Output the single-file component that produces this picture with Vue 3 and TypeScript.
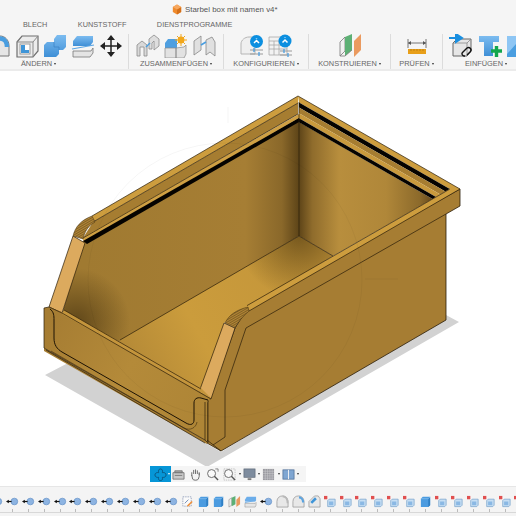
<template>
  <div class="app">
    <!-- icon sheet -->
    <svg class="sheet" width="0" height="0" aria-hidden="true">
      <defs>
        <linearGradient id="blueFace" x1="0" y1="0" x2="0" y2="1">
          <stop offset="0" stop-color="#7cbcf0" />
          <stop offset="1" stop-color="#3f8fd6" />
        </linearGradient>
      </defs>
      <symbol id="fillet" viewBox="0 0 24 24">
        <path d="M2 22V12C2 6 7 2 13 2C18 2 22 6 22 12V22Z" fill="#e6e6e6" stroke="#777" />
        <path d="M13 4.500C17 4.500 20 8 20 13" fill="none" stroke="#4a9ee0" stroke-width="4.500" />
      </symbol>
      <symbol id="shell" viewBox="0 0 24 24">
        <path d="M2 8L7 2H23V17L18 23H2Z" fill="#ececec" stroke="#6f6f6f" stroke-width="1.200" />
        <path d="M2 8H18V23M18 8L23 2" fill="none" stroke="#8a8a8a" />
        <rect x="5" y="10" width="10" height="10" fill="#fff" stroke="#999" />
        <path d="M6 11H10V16H14V19H6Z" fill="#3f95d8" />
      </symbol>
      <symbol id="combine" viewBox="0 0 24 24">
        <path d="M11 5L14 1H23V13L20 16H16V20L13 23H1V11L4 8H11Z" fill="url(#blueFace)" />
        <path d="M11 8V13H16V16" fill="none" stroke="#3a82c4" stroke-width=".7" />
      </symbol>
      <symbol id="offset" viewBox="0 0 24 24">
        <path d="M2 7L6 2H22V8L19 12H2Z" fill="url(#blueFace)" />
        <path d="M1 15L23 11" stroke="#5aa5e4" stroke-width="1.200" />
        <path d="M2 17H20L22 14V19L19 23H2Z" fill="#e4e4e4" stroke="#777" stroke-width=".8" />
      </symbol>
      <symbol id="move" viewBox="0 0 24 24">
        <path d="M12 3V21M3 12H21" stroke="#222" stroke-width="1.500" />
        <path d="M12 1L16 6H8ZM12 23L8 18H16ZM1 12L6 8V16ZM23 12L18 16V8Z" fill="#222" />
      </symbol>
      <symbol id="joinA" viewBox="0 0 24 24">
        <path d="M1 22V11L6 7L11 11V22H8V13H4V22Z" fill="#d9d9d9" stroke="#8a8a8a" stroke-width=".8" />
        <path d="M13 15V5L18 1L23 5V12L18 16V7L16 9V15Z" fill="#dedede" stroke="#8a8a8a" stroke-width=".8" />
        <path d="M10 13L14 9" stroke="#4a9ee0" stroke-width="1.400" />
      </symbol>
      <symbol id="asbuilt" viewBox="0 0 24 24">
        <path d="M1 9L4 5H13V14H1Z" fill="#4f9fe0" />
        <path d="M1 14H12V24H1ZM12 14L20 13L22 11V20L20 24H12Z" fill="#e2e2e2" stroke="#888" stroke-width=".7" />
        <circle cx="17" cy="6" r="3.400" fill="#f2a71b" />
        <path d="M17 0V12M11 6H23M13 2L21 10M21 2L13 10" stroke="#f2a71b" stroke-width="1" />
      </symbol>
      <symbol id="joinB" viewBox="0 0 24 24">
        <path d="M2 21V7L9 2V16Z" fill="#e0e0e0" stroke="#888" stroke-width=".8" />
        <path d="M14 6L20 3L23 8V22L18 18L14 21Z" fill="#e0e0e0" stroke="#888" stroke-width=".8" />
        <path d="M9 11L14 8" stroke="#4a9ee0" stroke-width="1.600" />
      </symbol>
      <symbol id="config" viewBox="0 0 24 24">
        <path d="M1 20V10C1 6 5 3 9 3H15V20Z" fill="#efefef" stroke="#b5b5b5" />
        <circle cx="16.500" cy="7.500" r="6.500" fill="#0c8fe0" />
        <path d="M14 9L16.500 6.500L19 9M16.500 4.500V4" stroke="#fff" stroke-width="1.500" fill="none" />
        <path d="M10 16H23M10 20H23" stroke="#9a9a9a" />
        <path d="M14 14V18M19 18V22" stroke="#4a9ee0" stroke-width="1.300" />
      </symbol>
      <symbol id="table" viewBox="0 0 24 24">
        <path d="M1 3H19V21H1ZM1 7H19M1 11H19M1 15H19M6 7V21M11 7V21" fill="#f2f2f2" stroke="#a8a8a8" stroke-width=".8" />
        <circle cx="17" cy="7" r="6.500" fill="#0c8fe0" />
        <path d="M14.500 8.500L17 6L19.500 8.500M17 4V3.500" stroke="#fff" stroke-width="1.500" fill="none" />
        <path d="M12 17H24M12 21H24" stroke="#9a9a9a" />
        <path d="M16 15V19M20 19V23" stroke="#4a9ee0" stroke-width="1.300" />
      </symbol>
      <symbol id="plane" viewBox="0 0 24 24">
        <path d="M2 8L7 3V17L2 22Z" fill="#f1f1f1" stroke="#777" stroke-width=".8" />
        <path d="M7 3L14 0V16L7 22Z" fill="#5db075" />
        <path d="M2 22H7L14 16" fill="none" stroke="#777" stroke-width=".8" />
        <path d="M16 7L23 0V16L16 23Z" fill="#ea9a5f" />
      </symbol>
      <symbol id="ruler" viewBox="0 0 24 24">
        <path d="M3 5V14M21 5V14" stroke="#777" />
        <path d="M3 9H21" stroke="#777" />
        <path d="M3 9L6 7V11ZM21 9L18 7V11Z" fill="#555" />
        <rect x="3" y="15" width="18" height="5" fill="#e89f19" />
        <path d="M6 15V17M9 15V17M12 15V17M15 15V17M18 15V17" stroke="#a66f0c" stroke-width=".6" />
      </symbol>
      <symbol id="link" viewBox="0 0 24 24">
        <path d="M4 9L8 5H22V17L18 22H4Z" fill="#e6e6e6" stroke="#666" />
        <path d="M18 9V22M4 9H18L22 5" fill="none" stroke="#888" stroke-width=".8" />
        <path d="M0 4H7M7 0L13 4L7 8Z" stroke="#1a8fe0" stroke-width="2" fill="#1a8fe0" />
        <path d="M13 19L18 14A2.500 2.500 0 0 1 21.500 17.500L18 21M13 19A2.500 2.500 0 0 0 16 22" fill="none" stroke="#111" stroke-width="1.400" />
      </symbol>
      <symbol id="bolt" viewBox="0 0 24 24">
        <path d="M1 2H21V8H15V22H6V8H1Z" fill="url(#blueFace)" />
        <path d="M13 17H24M18.500 12V23" stroke="#13a64d" stroke-width="3.400" />
      </symbol>
      <symbol id="image" viewBox="0 0 24 24">
        <rect x="0" y="2" width="24" height="21" fill="#4a9ee0" />
        <path d="M0 20L9 10L14 14L24 6V2H0Z" fill="#8ec6f4" />
      </symbol>

      <symbol id="t-joint" viewBox="0 0 14 14">
        <circle cx="9" cy="7" r="3.600" fill="#8db4e2" stroke="#5e8cc4" stroke-width=".7" />
        <path d="M2 7H6" stroke="#111" stroke-width="1.300" />
        <path d="M0 7L3 5V9Z" fill="#111" />
      </symbol>
      <symbol id="t-sketch" viewBox="0 0 14 14">
        <path d="M2 2H11V12H2Z" fill="#fafafa" stroke="#7f8fb0" stroke-width=".8" stroke-dasharray="1.500 1" />
        <path d="M4 9L8 5" stroke="#6d86b0" />
        <path d="M7 12L12 7" stroke="#ef8f3a" stroke-width="1.600" />
      </symbol>
      <symbol id="t-box" viewBox="0 0 14 14">
        <path d="M2 4L4 2H12V11L10 13H2Z" fill="#4b9be0" />
        <path d="M10 4L12 2V11L10 13Z" fill="#2f7fc4" />
        <path d="M2 4H10L12 2" fill="none" stroke="#9ccbf2" stroke-width=".6" />
      </symbol>
      <symbol id="t-split" viewBox="0 0 14 14">
        <path d="M1 5L4 3V11L1 13Z" fill="#eee" stroke="#888" stroke-width=".6" />
        <path d="M4 3L8 1V10L4 12Z" fill="#5db075" />
        <path d="M9 5L13 1V10L9 13Z" fill="#ea9a5f" />
      </symbol>
      <symbol id="t-offset" viewBox="0 0 14 14">
        <path d="M1 5L3 2H13V5L12 7H1Z" fill="#6badea" />
        <path d="M1 8L13 6" stroke="#6badea" />
        <path d="M1 9H12L13 8V11L12 13H1Z" fill="#e6e6e6" stroke="#888" stroke-width=".5" />
      </symbol>
      <symbol id="t-fillet" viewBox="0 0 14 14">
        <path d="M1 13V7C1 3 4 1 7 1C11 1 13 4 13 8V13Z" fill="#e8e8e8" stroke="#8b8b8b" stroke-width=".7" />
        <path d="M7 1.500C11 1.500 12.500 5 12.500 9" fill="none" stroke="#b9b9b9" stroke-width="2" />
      </symbol>
      <symbol id="t-fillet2" viewBox="0 0 14 14">
        <path d="M1 13V7C1 3 4 1 7 1C11 1 13 4 13 8V13Z" fill="#e8e8e8" stroke="#8b8b8b" stroke-width=".7" />
        <path d="M7.500 2.500C10 2.500 12 5 12 8" fill="none" stroke="#5aa3e0" stroke-width="2.400" />
      </symbol>
      <symbol id="t-chamfer" viewBox="0 0 14 14">
        <path d="M1 13V7L7 1H11L13 4V13Z" fill="#e8e8e8" stroke="#8b8b8b" stroke-width=".7" />
        <path d="M2.500 7.500L7.500 2.500L9.500 4.500L4.500 9.500Z" fill="#3f95d8" />
      </symbol>
      <symbol id="t-xbox" viewBox="0 0 14 14">
        <rect x="0" y="1" width="3.600" height="3.600" fill="#e04f4f" />
        <path d="M4 6L5.500 4.500H12V11L10.500 12.500H4Z" fill="#c6def3" stroke="#6a9ac8" stroke-width=".7" />
        <rect x="5.500" y="7" width="4.500" height="4" fill="#8ab8e4" />
      </symbol>

      <symbol id="n-orbit" viewBox="0 0 14 14">
        <path d="M7 1C9 1 9.500 3 9 5C11 4.500 13 5.500 13 7.500C13 9.500 11 10.500 9 10C9.500 12 9 13.500 7 13.500C5 13.500 4.500 12 5 10C3 10.500 1 9.500 1 7.500C1 5.500 3 4.500 5 5C4.500 3 5 1 7 1Z" fill="none" stroke="#0b4f78" stroke-width=".9" />
      </symbol>
      <symbol id="n-look" viewBox="0 0 14 14">
        <path d="M1 5H13V12H1Z" fill="#c8c8c8" stroke="#666" stroke-width=".8" />
        <path d="M3 3H11V5H3ZM3 8H11" fill="#aaa" stroke="#666" stroke-width=".8" />
      </symbol>
      <symbol id="n-hand" viewBox="0 0 14 14">
        <path d="M3 8V5M5 6V2.500M7 6V2M9 6V3M11 7V5M3 8L4 12C5 13.500 9 13.500 10 12L11 9V6" fill="#f4f4f4" stroke="#666" stroke-width="1" stroke-linecap="round" />
      </symbol>
      <symbol id="n-zoom" viewBox="0 0 14 14">
        <circle cx="6" cy="6" r="4.300" fill="#fafafa" stroke="#666" />
        <path d="M9 9L13 13" stroke="#555" stroke-width="1.500" />
        <path d="M10 1H13V4" fill="none" stroke="#666" stroke-width=".8" />
      </symbol>
      <symbol id="n-fit" viewBox="0 0 14 14">
        <path d="M1 1H13V13H1Z" fill="none" stroke="#aaa" stroke-width=".7" stroke-dasharray="1.500 1" />
        <circle cx="6" cy="6" r="4.300" fill="#fafafa" stroke="#666" />
        <path d="M9 9L13 13" stroke="#555" stroke-width="1.500" />
      </symbol>
      <symbol id="n-screen" viewBox="0 0 14 14">
        <rect x="1" y="1" width="12" height="9" fill="#7e8c9e" stroke="#5b6675" stroke-width=".7" />
        <path d="M5 11H9V13H5Z" fill="#7c7c7c" />
      </symbol>
      <symbol id="n-grid" viewBox="0 0 14 14">
        <rect x="1" y="1" width="12" height="12" fill="#9a9aa0" />
        <path d="M3.500 1V13M6 1V13M8.500 1V13M11 1V13M1 3.500H13M1 6H13M1 8.500H13M1 11H13" stroke="#d2d2d6" stroke-width=".5" />
      </symbol>
      <symbol id="n-views" viewBox="0 0 14 14">
        <rect x="1" y="2" width="12" height="10" fill="#7fa6d2" stroke="#4f6f96" stroke-width=".8" />
        <path d="M7 2V12" stroke="#f4f4f4" />
      </symbol>
    </svg>

    <header class="toolbar">
      <div class="title">
        <svg class="doc-icon" viewBox="0 0 12 12">
          <path d="M6 0L11 3V9L6 12L1 9V3Z" fill="#ef8a2c" />
          <path d="M6 6L11 3V9L6 12Z" fill="#d4701a" />
          <path d="M6 0L11 3L6 6L1 3Z" fill="#f6a860" />
        </svg>
        <span>Starbel box mit namen v4*</span>
      </div>
      <nav class="tabs">
        <span v-for="t in tabs" :key="t">{{ t }}</span>
      </nav>
      <div class="panels">
        <section v-for="p in panels" :key="p.label" class="panel" :class="p.cls">
          <div class="panel-icons">
            <svg v-for="(ic, i) in p.icons" :key="i" class="tool"><use :href="'#' + ic" /></svg>
          </div>
          <div class="panel-label">{{ p.label }}<i class="caret"></i></div>
        </section>
      </div>
    </header>

    <main class="viewport">
      <svg class="scene" viewBox="0 71 516 415">
        <defs>
          <linearGradient id="wallR" gradientUnits="userSpaceOnUse" x1="299" y1="0" x2="433" y2="0">
            <stop offset="0" stop-color="#5d4418" />
            <stop offset=".1" stop-color="#8f6c2c" />
            <stop offset=".3" stop-color="#b88e3d" />
            <stop offset=".65" stop-color="#b08739" />
            <stop offset=".9" stop-color="#8c6a2b" />
            <stop offset="1" stop-color="#66491c" />
          </linearGradient>
          <linearGradient id="wallL" gradientUnits="userSpaceOnUse" x1="85" y1="0" x2="299" y2="0">
            <stop offset="0" stop-color="#a07a31" />
            <stop offset=".75" stop-color="#a67e34" />
            <stop offset=".92" stop-color="#8a682a" />
            <stop offset="1" stop-color="#5d4418" />
          </linearGradient>
          <radialGradient id="cornerDark" gradientUnits="userSpaceOnUse" cx="76" cy="322" r="54">
            <stop offset="0" stop-color="#2c1e06" stop-opacity=".55" />
            <stop offset="1" stop-color="#2c1e06" stop-opacity="0" />
          </radialGradient>
          <radialGradient id="floorDark" gradientUnits="userSpaceOnUse" cx="299" cy="236" r="62">
            <stop offset="0" stop-color="#3a2808" stop-opacity=".55" />
            <stop offset="1" stop-color="#3a2808" stop-opacity="0" />
          </radialGradient>
          <linearGradient id="floor" gradientUnits="userSpaceOnUse" x1="120" y1="340" x2="300" y2="240">
            <stop offset="0" stop-color="#b58a37" />
            <stop offset=".35" stop-color="#cb9c3c" />
            <stop offset="1" stop-color="#c3953a" />
          </linearGradient>
          <linearGradient id="plate" gradientUnits="userSpaceOnUse" x1="44" y1="330" x2="205" y2="420">
            <stop offset="0" stop-color="#a67d33" />
            <stop offset=".5" stop-color="#b48a39" />
            <stop offset="1" stop-color="#ae8536" />
          </linearGradient>
          <pattern id="hatch" width="2" height="2" patternUnits="userSpaceOnUse" patternTransform="rotate(-30)">
            <rect width="2" height="2" fill="#b38737" />
            <path d="M0 .5H2" stroke="#6c4f1c" stroke-width=".7" />
          </pattern>
        </defs>

        <polygon class="shadow" points="68,363 45,375 207,467 459,322 446,315 221,452" />

        <!-- inside of the bin -->
        <polygon fill="url(#wallL)" points="299,118 83,241 62,314 120,342 299,236" />
        <polygon fill="url(#cornerDark)" points="299,118 83,241 62,314 120,342 299,236" />
        <polygon fill="url(#wallR)" points="299,122 432.600,199 333,256 299,236" />
        <polygon fill="url(#floor)" points="120,340 299,236 333,256 224,323 204,396 120,348" />
        <polygon fill="url(#floorDark)" points="120,340 299,236 333,256 224,323 204,396 120,348" />
        <path class="ln" d="M299 122V236M120 340L299 236L333 256" />

        <!-- back rim, left run -->
        <polygon fill="#a67d31" points="298,103 298,114 83,238 93,222" />
        <polygon fill="#cfa043" points="299,114 299,118 85,243 82,238" />
        <polygon fill="#050300" points="299,118 299,122 87,244 83,241" />
        <polygon fill="#cd9d3e" points="298,96 298,103 93,222 92,216" />
        <path class="ln" d="M298 96L92 216M298 103L93 222M298 114L83 238" />

        <!-- back rim, right run -->
        <polygon fill="#cd9d3e" points="298,96 460,189 449.800,189.100 299,102.500" />
        <polygon fill="#050300" points="299,102.500 449.800,189.100 445.400,191.600 299,107.500" />
        <polygon fill="#a67d31" points="299,107.500 445.400,191.600 440.400,194.500 299,113.300" />
        <polygon fill="#c99a3d" points="299,113.300 440.400,194.500 436,197 299,118.300" />
        <polygon fill="#050300" points="299,118.300 436,197 432.600,199 299,122.300" />
        <path class="ln" d="M298 96L460 189M299 102V122" />

        <!-- outer side -->
        <polygon fill="#a67d33" stroke="#2a1c08" stroke-width=".8" stroke-linejoin="round"
          points="248,307 460,189 460,206 446,214 446,320 221,451 207,443 207,403 210,398 235,328" />
        <polygon fill="#cd9d3e" points="460,189 449.800,189.100 247,305.600 249,311" />
        <path class="ln" d="M449.800 189.100L247 305.600M460 189L249 311M446 214L246 328L225 390V437L213 445M207 440L221 451" />

        <!-- raised strips and hatched radii -->
        <polygon fill="#dcaa5e" stroke="#2a1c08" stroke-width=".7" points="73,236 85,243 62,313 49,307" />
        <polygon fill="#dcaa5e" stroke="#2a1c08" stroke-width=".7" points="224,323 235,328 211,399 199,392" />
        <path fill="url(#hatch)" stroke="#3c2a0c" stroke-width=".5" d="M73 236C75 227 81 220 92 216L95 222C88 226 85 231 83 239Z" />
        <path fill="url(#hatch)" stroke="#3c2a0c" stroke-width=".5" d="M225 323C229 315 236 310 248 307L249 311C243 316 238 322 235 328Z" />

        <!-- front plate -->
        <polygon fill="url(#plate)" points="44,308 49,307 62,312 211,398 207,403 207,441 205,440 44,348" />
        <polygon fill="#c4953c" points="64,310 201,388 211,398 62,314" />
        <polygon fill="#a67d33" points="44,348 207,441 207,444 44,351" />
        <path class="ln" d="M44 308V348L205 440L207 442M44 308L49 307L62 313L211 399M64 310L201 389M205 402V440M208 400V443" />
        <path class="ln" d="M46 350L205 443" />
        <path class="groove" d="M50 309C54 312 54 316 54 320V338C54 345 57 349 62 352L186 423C191 426 194 424 194 420V403C194 399 197 397 201 398L208 400" />
        <path class="ln thin" d="M51 351L184 428C190 431 196 428 197 422" />

        <!-- view ring of the rotate gizmo, barely visible -->
        <circle class="ring" cx="225" cy="280" r="137" />
        <path class="ring" d="M228 107V123M365 279H398" />
      </svg>

      <div class="navbar">
        <div class="nav-active">
          <svg class="nav-ic"><use href="#n-orbit" /></svg>
          <i class="caret light"></i>
        </div>
        <div class="nav-items">
          <template v-for="n in navItems" :key="n.icon">
            <svg class="nav-ic"><use :href="'#' + n.icon" /></svg>
            <i v-if="n.caret" class="caret dark"></i>
          </template>
        </div>
      </div>
    </main>

    <footer class="timeline">
      <div class="track">
        <div v-for="(t, i) in timeline" :key="i" class="step">
          <svg class="step-ic"><use :href="'#t-' + t" /></svg>
          <i class="tick"></i>
        </div>
      </div>
    </footer>
  </div>
</template>

<script setup lang="ts">
const tabs = ['BLECH', 'KUNSTSTOFF', 'DIENSTPROGRAMME']

const panels = [
  { label: 'ÄNDERN', cls: 'p-modify', icons: ['fillet', 'shell', 'combine', 'offset', 'move'] },
  { label: 'ZUSAMMENFÜGEN', cls: 'p-assemble', icons: ['joinA', 'asbuilt', 'joinB'] },
  { label: 'KONFIGURIEREN', cls: 'p-config', icons: ['config', 'table'] },
  { label: 'KONSTRUIEREN', cls: 'p-construct', icons: ['plane'] },
  { label: 'PRÜFEN', cls: 'p-inspect', icons: ['ruler'] },
  { label: 'EINFÜGEN', cls: 'p-insert', icons: ['link', 'bolt', 'image'] },
]

const navItems = [
  { icon: 'n-look', caret: false },
  { icon: 'n-hand', caret: false },
  { icon: 'n-zoom', caret: false },
  { icon: 'n-fit', caret: true },
  { icon: 'n-screen', caret: true },
  { icon: 'n-grid', caret: true },
  { icon: 'n-views', caret: true },
]

const rep = (name: string, n: number) => Array<string>(n).fill(name)

const timeline: string[] = [
  ...rep('joint', 12),
  'sketch', 'box', 'box', 'split', 'offset', 'joint',
  'fillet', 'fillet2', 'chamfer',
  ...rep('xbox', 6),
  'box',
  ...rep('xbox', 6),
]
</script>

<style>
html, body { margin: 0; overflow: hidden; background: #fff; }
</style>

<style scoped>
.app {
  width: 516px;
  height: 516px;
  display: flex;
  flex-direction: column;
  overflow: hidden;
  font-family: "Liberation Sans", Arial, sans-serif;
  background: #fff;
}
.sheet { position: absolute; }

.toolbar {
  height: 71px;
  flex: none;
  box-sizing: border-box;
  background: #f5f5f5;
  border-bottom: 2px solid #ebebeb;
}
.title {
  height: 18px;
  display: flex;
  align-items: center;
  gap: 3px;
  padding-left: 172px;
  font-size: 7.9px;
  color: #555;
}
.doc-icon { width: 10px; height: 11px; }
.tabs {
  height: 12px;
  display: flex;
  align-items: center;
  gap: 30.5px;
  padding-left: 23px;
  font-size: 7.3px;
  color: #666;
}
.panels {
  display: flex;
  margin-left: -51px;
  height: 35px;
  margin-top: 4px;
}
.panel {
  flex: none;
  box-sizing: border-box;
  border-right: 1px solid #dcdcdc;
  display: flex;
  flex-direction: column;
}
.p-modify { width: 180px; }
.p-assemble { width: 95px; }
.p-config { width: 85px; }
.p-construct { width: 82px; }
.p-inspect { width: 52px; }
.p-insert { width: 86px; border-right: 0; }
.panel-icons {
  height: 23px;
  display: flex;
  justify-content: center;
  gap: 4px;
}
.p-modify .panel-icons { justify-content: flex-end; padding-right: 5px; }
.p-insert .panel-icons { justify-content: flex-start; padding-left: 6px; gap: 5px; }
.tool { width: 24px; height: 24px; flex: none; }
.panel-label {
  margin-top: 2px;
  font-size: 7.4px;
  line-height: 10px;
  color: #666;
  text-align: center;
  white-space: nowrap;
}
.caret {
  display: inline-block;
  margin-left: 2px;
  vertical-align: 1px;
  border-left: 1.5px solid transparent;
  border-right: 1.5px solid transparent;
  border-top: 2px solid #333;
}

.viewport {
  position: relative;
  height: 415px;
  flex: none;
}
.scene { display: block; width: 516px; height: 415px; }
.shadow { fill: #d2d2d2; }
.ln { fill: none; stroke: #2a1c08; stroke-width: .7; }
.ln.thin { stroke-width: .5; }
.groove { fill: none; stroke: #1c1204; stroke-width: 1; }
.ring { fill: none; stroke: #000; stroke-opacity: .06; stroke-width: .7; }

.navbar {
  position: absolute;
  left: 150px;
  bottom: 4px;
  height: 16px;
  width: 156px;
  display: flex;
  background: #f5f5f5;
}
.nav-active {
  flex: none;
  width: 21px;
  display: flex;
  align-items: center;
  padding-left: 4px;
  box-sizing: border-box;
  background: #0696d7;
}
.nav-items {
  flex: none;
  display: flex;
  align-items: center;
  gap: 4px;
  padding-left: 1px;
}
.nav-ic { width: 13px; height: 13px; flex: none; }
.caret.light { border-top-color: #fff; margin-left: 1px; }
.caret.dark { margin: 0 -2px 0 -1.5px; vertical-align: 0; }

.timeline {
  flex: 1;
  box-sizing: border-box;
  background: #f4f4f4;
  border-top: 1px solid #e6e6e6;
}
.track {
  display: flex;
  margin-left: -11.45px;
  height: 25px;
  border-bottom: 1px solid #d8d8d8;
}
.step {
  flex: 0 0 15.9px;
  display: flex;
  flex-direction: column;
  align-items: center;
  padding-top: 8px;
  box-sizing: border-box;
}
.step-ic { width: 13px; height: 13px; flex: none; }
.tick {
  width: 1px;
  height: 3px;
  margin-top: 1px;
  background: #bbb;
}
</style>
